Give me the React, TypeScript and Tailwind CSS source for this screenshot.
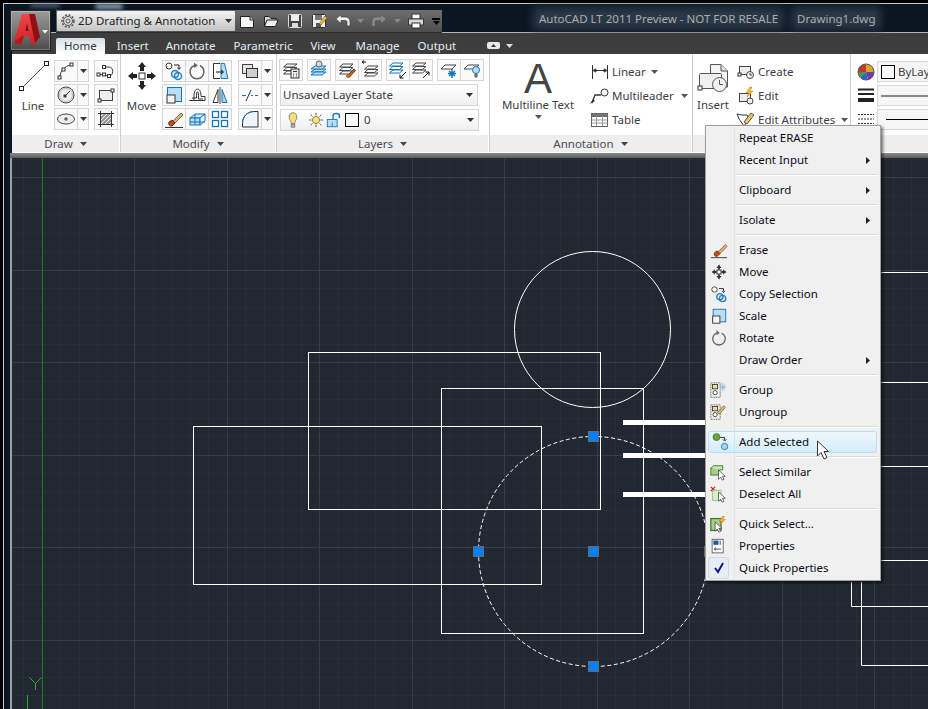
import type { ReactNode } from "react";

const range = (from: number, to: number, step: number) => {
  const out: number[] = [];
  for (let v = from; v <= to; v += step) out.push(v);
  return out;
};

function I({ s = 20, children }: { s?: number; children: ReactNode }) {
  return (
    <svg width={s} height={s} viewBox="0 0 20 20" fill="none" stroke="#3a3a3a" strokeWidth={1} className="shrink-0">
      {children}
    </svg>
  );
}

const Sq = ({ x, y, r = 1.5 }: { x: number; y: number; r?: number }) => (
  <rect x={x - r} y={y - r} width={r * 2} height={r * 2} fill="#fff" stroke="#333" />
);

const ArcIcon = () => (
  <I>
    <path d="M3.5 16.5Q5 6 15.5 3.5" />
    <Sq x={3.5} y={16.5} />
    <Sq x={7.5} y={8.5} />
    <Sq x={15.5} y={3.5} />
  </I>
);
const CircleIcon = () => (
  <I>
    <circle cx="10" cy="10" r="8" fill="#eee" stroke="#444" />
    <circle cx="10" cy="10" r="6.5" stroke="#bbb" />
    <path d="M9 11L14 6" />
    <rect x="8" y="10" width="2" height="2" fill="#333" />
  </I>
);
const EllipseIcon = () => (
  <I>
    <ellipse cx="10" cy="10" rx="8.5" ry="5" fill="#eee" stroke="#444" />
    <path d="M8 10h4M10 8v4" />
  </I>
);
const SplineIcon = () => (
  <I>
    <path d="M3 13.5H7C9 13.5 10 15 13 15C18 15 18 6 13 6H8" />
    <Sq x={2.5} y={13.5} />
    <Sq x={8} y={13.5} />
    <Sq x={13} y={15} />
    <Sq x={8} y={6} />
  </I>
);
const RectIcon = () => (
  <I>
    <rect x="3.5" y="5.5" width="13" height="10" fill="#eee" stroke="#444" />
    <Sq x={3.5} y={15.5} />
    <Sq x={16.5} y={5.5} />
  </I>
);
const HatchIcon = () => (
  <I>
    <rect x="4.5" y="4.5" width="11" height="11" fill="#999" stroke="#777" />
    <path d="M4 8L8 4M4 12L12 4M4 16L16 4M8 16L16 8M12 16L16 12" stroke="#eee" />
    <path d="M2 4.5H18M2 15.5H18M4.5 2V18M15.5 2V18" stroke="#333" />
  </I>
);
const CopyIcon = ({ s = 20 }: { s?: number }) => (
  <I s={s}>
    <circle cx="5" cy="5" r="3" fill="#fff" />
    <path d="M10 4h5v3M13.5 6.5l1.5 2 1.5-2" stroke="#222" />
    <circle cx="11" cy="13" r="3.5" stroke="#2b7fc4" strokeWidth={1.5} fill="#dcecf8" />
    <circle cx="14" cy="15" r="3.5" stroke="#2b7fc4" strokeWidth={1.5} />
  </I>
);
const RotateIcon = ({ s = 20 }: { s?: number }) => (
  <I s={s}>
    <path d="M7 4.5A7 7 0 1 0 13 4.5" stroke="#666" strokeWidth={1.5} />
    <path d="M7 1.5L11 4.5L7 7Z" fill="#666" stroke="none" />
  </I>
);
const StretchIcon = () => (
  <I>
    <path d="M10 2.5H3.5V17.5H10" stroke="#333" />
    <path d="M11 2.5H14.5L18 17.5H11Z" fill="#bcdcf2" stroke="#1c7cc4" />
    <path d="M6 11h7M11 9l2.5 2-2.5 2" stroke="#111" />
  </I>
);
const ScaleIcon = ({ s = 20 }: { s?: number }) => (
  <I s={s}>
    <rect x="3.5" y="2.5" width="14" height="14" fill="#b9dcf0" stroke="#1576bd" />
    <rect x="3" y="10" width="8" height="8" fill="#f4f4f4" stroke="#333" />
  </I>
);
const OffsetIcon = () => (
  <I>
    <path d="M2.5 15.5H7V10.5C7 2 14 2 14 10.5V11.5H18V15.5Z" stroke="#333" />
    <path d="M5 13H9.5V10.5C9.5 5.5 11.500 5.500 11.500 10.500V14H16" stroke="#333" />
  </I>
);
const MirrorIcon = () => (
  <I>
    <path d="M8 4.500L3 17.500H8Z" fill="#fff" stroke="#333" />
    <path d="M12 4.500L17 17.500H12Z" fill="#a9d3ef" stroke="#1576bd" />
    <path d="M10 2V19" stroke="#444" />
  </I>
);
const EraseIcon = ({ s = 20 }: { s?: number }) => (
  <I s={s}>
    <path d="M8 13L17 4L19 6L10 15Z" fill="#d9b27a" stroke="#8a6a3a" />
    <path d="M5 13L8 11L11 14L8 17C6 17.500 4 16 5 13Z" fill="#c2471a" stroke="#7a2a0c" />
    <path d="M1 18.500H19" stroke="#333" />
  </I>
);
const BoxIcon = () => (
  <I>
    <path d="M3 9L8 5H18L13 9Z" fill="#d4e8f6" stroke="#1576bd" />
    <rect x="3" y="9" width="10" height="7" fill="#bcdcf2" stroke="#1576bd" />
    <path d="M13 9L18 5V12L13 16Z" fill="#e6f2fa" stroke="#1576bd" />
    <path d="M8 5V16M3 13H18" stroke="#1576bd" />
  </I>
);
const ArrayIcon = () => (
  <I>
    <g fill="#fff" stroke="#1576bd" strokeWidth={1.3}>
      <rect x="2.500" y="2.500" width="6" height="6" />
      <rect x="11.500" y="2.500" width="6" height="6" />
      <rect x="2.500" y="11.500" width="6" height="6" />
      <rect x="11.500" y="11.500" width="6" height="6" />
    </g>
  </I>
);
const OrderIcon = () => (
  <I>
    <rect x="2.500" y="3.500" width="10" height="9" fill="#e4e4e4" stroke="#444" />
    <rect x="6.500" y="7.500" width="11" height="9" fill="#cfcfcf" stroke="#333" />
  </I>
);
const BreakIcon = () => (
  <I>
    <path d="M2 10.500H6M11 10.500H13M15 10.500H18" stroke="#1576bd" />
    <path d="M6 16L11 5" stroke="#333" />
  </I>
);
const FilletIcon = () => (
  <I>
    <path d="M2.500 18V14C2.500 7 8 2.500 14 2.500H18V18Z" fill="#eef5fb" stroke="#333" />
    <path d="M2.500 14C2.500 7 8 2.500 14 2.500" stroke="#1576bd" />
  </I>
);

// stack of layer sheets used by the Layers panel row
const Sheets = ({ blue = false }: { blue?: boolean }) => (
  <g fill="#fff" stroke={blue ? "#1576bd" : "#444"}>
    <path d="M2.500 14L6 11H16L12.500 14Z" />
    <path d="M2.500 10.500L6 7.500H16L12.500 10.500Z" />
    <path d="M2.500 7L6 4H16L12.500 7Z" />
  </g>
);
const LayerProps = () => (
  <I>
    <Sheets />
    <rect x="10" y="9" width="8" height="9" fill="#e8f0f6" stroke="#333" />
    <path d="M12 11.500h4M12 14h1M15 14h1M12 16h1M15 16h1" />
  </I>
);
const LayerState = () => (
  <I>
    <path d="M2 12L6 9H17L13 12Z" fill="#bcdcf2" stroke="#1576bd" />
    <path d="M2 15L6 12H17L13 15Z" fill="#bcdcf2" stroke="#1576bd" />
    <path d="M2 9L6 6H17L13 9Z" fill="#bcdcf2" stroke="#1576bd" />
    <circle cx="10" cy="4" r="3" fill="#cfd7dd" stroke="#666" />
  </I>
);
const LayerMatch = () => (
  <I>
    <Sheets />
    <path d="M10 16L17 9L18.500 10.500L12.500 17Z" fill="#b9692a" stroke="#6e3a12" />
    <circle cx="11" cy="16" r="2" fill="#b9692a" stroke="none" />
  </I>
);
const LayerPrev = () => (
  <I>
    <path d="M2 2h4M2 2l2-1.500M2 2l2 1.500" stroke="#111" />
    <g transform="translate(2 2)">
      <Sheets />
    </g>
  </I>
);
const LayerDown = ({ up = false, blue = false }: { up?: boolean; blue?: boolean }) => (
  <I>
    <g transform="translate(-1 -1)">
      <Sheets blue={blue} />
    </g>
    {up ? <path d="M12 18L18 12M14.500 12H18V15.500" stroke="#111" /> : <path d="M18 12L12 18M15.500 18H12V14.500" stroke="#111" />}
  </I>
);
const LayerFreeze = () => (
  <I>
    <path d="M2 9L6 5H17L13 9Z" fill="#fff" stroke="#444" />
    <path d="M13 9v9M9 13.500h8M10 11l6 5M16 11l-6 5" stroke="#1576bd" strokeWidth={1.5} />
  </I>
);
const LayerOff = () => (
  <I>
    <path d="M2 9L6 5H17L13 9Z" fill="#fff" stroke="#444" />
    <circle cx="14" cy="10" r="3.500" fill="#bcdcf2" stroke="#1576bd" />
    <path d="M13 14h2v3h-2Z" fill="#999" stroke="#555" />
  </I>
);
const Bulb = () => (
  <>
    <path d="M10 2C5 2 5 8 7 10.500C8 12 8 13 8 14H12C12 13 12 12 13 10.500C15 8 15 2 10 2Z" fill="#f7de7c" stroke="#777" />
    <path d="M8 15H12V18H8Z" fill="#bbb" stroke="#777" />
  </>
);
const Sun = () => (
  <>
    <circle cx="10" cy="10" r="4" fill="#f6e28a" stroke="#8a7a30" />
    <path d="M10 2v3M10 15v3M2 10h3M15 10h3M4 4l2 2M14 14l2 2M16 4l-2 2M6 14l-2 2" stroke="#555" />
  </>
);
const Lock = () => (
  <>
    <rect x="2.500" y="9.500" width="11" height="8" fill="#b9dcf0" stroke="#1576bd" />
    <path d="M8 17v-4" stroke="#1576bd" />
    <path d="M9 9V5C9 2 16 2 16 5V8" stroke="#1576bd" strokeWidth={1.6} />
  </>
);
const LinearIcon = () => (
  <I>
    <path d="M2.500 3V17M17.500 3V17" stroke="#333" />
    <path d="M3 8.500H17" stroke="#333" />
    <path d="M3 8.500l3-1.500v3ZM17 8.500l-3-1.500v3Z" fill="#333" />
  </I>
);
const LeaderIcon = () => (
  <I>
    <path d="M2 17L5 9H11" stroke="#333" strokeWidth={1.3} />
    <circle cx="14.500" cy="6.500" r="3.500" fill="#fff" stroke="#333" />
    <path d="M0 18L3 13L5 15Z" fill="#333" stroke="none" />
  </I>
);
const TableIcon = () => (
  <I>
    <rect x="1.500" y="3.500" width="16" height="13" fill="#fff" stroke="#666" />
    <rect x="1.500" y="3.500" width="16" height="3" fill="#777" stroke="#666" />
    <path d="M6.500 6v10M12.500 6v10M2 10h15M2 13h15" stroke="#999" />
  </I>
);
const CreateIcon = () => (
  <I>
    <rect x="3.500" y="4.500" width="11" height="8" fill="#eee" stroke="#444" />
    <rect x="2" y="11" width="3" height="3" fill="#fff" stroke="#333" />
    <circle cx="14" cy="13" r="3.500" fill="#eee" stroke="#444" />
    <path d="M14 11v2h2" stroke="#444" />
  </I>
);
const EditIcon = () => (
  <I>
    <rect x="3.500" y="7.500" width="11" height="8" fill="#eee" stroke="#444" />
    <circle cx="14" cy="15" r="3" fill="#eee" stroke="#444" />
    <path d="M14 1L10 7H13L11 11L17 5H14L16 1Z" fill="#f3c13a" stroke="#b07a10" strokeWidth={0.5} />
  </I>
);
const AttrIcon = () => (
  <I>
    <path d="M1 4L6 5H11L13 9L8 16L3 9Z" fill="#fff" stroke="#333" />
    <path d="M8 12L15 3L18 5L11 14Z" fill="#f1c95a" stroke="#555" />
  </I>
);
const ColorWheel = () => (
  <svg width="18" height="18" viewBox="0 0 18 18" className="shrink-0">
    <path d="M9 9L9 1A8 8 0 0 1 17 9Z" fill="#d8a62c" />
    <path d="M9 9L17 9A8 8 0 0 1 11 16.700Z" fill="#6a3fa8" />
    <path d="M9 9L11 16.700A8 8 0 0 1 3 14Z" fill="#2c62c4" />
    <path d="M9 9L3 14A8 8 0 0 1 1 9Z" fill="#3e9c3a" />
    <path d="M9 9L1 9A8 8 0 0 1 9 1Z" fill="#c23a2a" />
    <circle cx="9" cy="9" r="8" fill="none" stroke="#555" />
  </svg>
);

const GroupIcon = () => (
  <I s={17}>
    <rect x="1" y="1" width="11" height="17" stroke="#333" strokeDasharray="1 1" />
    <rect x="3" y="3" width="6" height="5" fill="#f2df8a" stroke="#333" />
    <circle cx="6" cy="12.500" r="2.500" fill="#fff" stroke="#333" />
    <path d="M12 3l6 6M18 3l-6 6M15 1v10M11 6h8" stroke="#7ab6e6" />
  </I>
);
const UngroupIcon = () => (
  <I s={17}>
    <rect x="1" y="1" width="11" height="17" stroke="#333" strokeDasharray="1 1" />
    <rect x="3" y="3" width="6" height="5" fill="#f2df8a" stroke="#333" />
    <circle cx="6" cy="12.500" r="2.500" fill="#fff" stroke="#333" />
    <path d="M9 10L16 2L18 4L11 12Z" fill="#e7c24a" stroke="#666" />
  </I>
);
const AddSelIcon = () => (
  <I s={18}>
    <circle cx="5" cy="4.500" r="3.800" fill="#6aa540" stroke="#3c7a20" />
    <path d="M9 5h5v3M12 7l2 2 2-2" stroke="#222" />
    <circle cx="14" cy="15" r="3.500" fill="#a9d3ef" stroke="#1576bd" />
  </I>
);
const Arrow = ({ x, y }: { x: number; y: number }) => (
  <path transform={`translate(${x} ${y})`} d="M0 0V11L2.500 8.500L4.500 12L6.500 11L4.500 7.500H8Z" fill="#fff" stroke="#444" strokeWidth={0.9} />
);
const SimilarIcon = () => (
  <I s={17}>
    <rect x="1" y="5" width="10" height="8" fill="#a8cc88" stroke="#2d7a20" />
    <path d="M1 5L4 2H15V7H11" fill="#c9e0b2" stroke="#2d7a20" />
    <Arrow x={10} y={7} />
  </I>
);
const DeselectIcon = () => (
  <I s={17}>
    <path d="M1 1l5 5M6 1L1 6" stroke="#d0241c" strokeWidth={1.5} />
    <rect x="3" y="5" width="10" height="12" fill="#d9ecc6" stroke="#2d9a20" strokeDasharray="1 1" />
    <Arrow x={10} y={7} />
  </I>
);
const QuickSelIcon = () => (
  <I s={17}>
    <rect x="1" y="3" width="12" height="14" fill="#a8cc88" stroke="#2d7a20" strokeWidth={1.4} />
    <path d="M15 0L11 6H14L12 10L18 4H15L17 0Z" fill="#f3c13a" stroke="#c0651a" strokeWidth={0.6} />
    <Arrow x={6} y={7} />
  </I>
);
const PropsIcon = () => (
  <I s={17}>
    <rect x="2.500" y="1.500" width="13" height="16" fill="#fff" stroke="#555" />
    <rect x="4" y="3" width="6" height="5" fill="#1f5a96" stroke="none" />
    <path d="M12 3v5M5 13h8M5 13l2-1.500M5 13l2 1.500" stroke="#333" />
  </I>
);

const MoveIcon = () => (
  <svg width="32" height="32" viewBox="0 0 32 32" className="shrink-0">
    <rect x="13" y="13" width="6" height="6" fill="#fff" stroke="#333" />
    <path d="M16 2L20 7H18V11H14V7H12ZM16 30L20 25H18V21H14V25H12ZM2 16L7 12V14H11V18H7V20ZM30 16L25 12V14H21V18H25V20Z" fill="#222" />
  </svg>
);
const MiniMove = () => (
  <svg width="16" height="16" viewBox="0 0 32 32" className="shrink-0">
    <rect x="12" y="12" width="8" height="8" fill="#fff" stroke="#333" strokeWidth={2} />
    <path d="M16 1L21 8H18V11H14V8H11ZM16 31L21 24H18V21H14V24H11ZM1 16L8 11V14H11V18H8V21ZM31 16L24 11V14H21V18H24V21Z" fill="#333" />
  </svg>
);

const Caret = ({ c = "#333" }: { c?: string }) => (
  <svg width="7" height="4" viewBox="0 0 7 4" className="shrink-0">
    <path d="M0 0H7L3.500 4Z" fill={c} />
  </svg>
);

function Tool({ children, split = false }: { children?: ReactNode; split?: boolean }) {
  return (
    <div
      className={`flex h-[22px] ${split ? "w-[12px]" : "w-[24px]"} -mr-px items-center justify-center border border-[#d6d6d6] bg-[#fafafa]`}
    >
      {split ? <Caret /> : children}
    </div>
  );
}

function Row({ children }: { children: ReactNode }) {
  return <div className="flex h-[22px]">{children}</div>;
}

function Panel({ w, title, children }: { w: string; title: string; children: ReactNode }) {
  return (
    <div className={`flex ${w} shrink-0 flex-col border-r border-[#cfcfcf]`}>
      <div className="h-[81px] overflow-hidden bg-white">{children}</div>
      <div className="mr-px flex h-[17px] items-center justify-center gap-[7px] bg-[#eeeeee] text-[11.5px] leading-none text-[#4c4c56]">
        <span>{title}</span>
        <Caret c="#444" />
      </div>
    </div>
  );
}

function TextTool({ icon, label, caret, gap }: { icon: ReactNode; label: string; caret?: boolean; gap?: string }) {
  return (
    <div className="flex h-[24px] items-center">
      {icon}
      <span className="ml-[2px] whitespace-nowrap text-[#3c3c46]">{label}</span>
      {caret && (
        <span className={gap}>
          <Caret c="#555" />
        </span>
      )}
    </div>
  );
}

type MenuEntry =
  | { sep: true }
  | { label: string; icon?: ReactNode; sub?: boolean; hot?: boolean; checked?: boolean };

const menu: MenuEntry[] = [
  { label: "Repeat ERASE" },
  { label: "Recent Input", sub: true },
  { sep: true },
  { label: "Clipboard", sub: true },
  { sep: true },
  { label: "Isolate", sub: true },
  { sep: true },
  { label: "Erase", icon: <EraseIcon s={18} /> },
  { label: "Move", icon: <MiniMove /> },
  { label: "Copy Selection", icon: <CopyIcon s={18} /> },
  { label: "Scale", icon: <ScaleIcon s={18} /> },
  { label: "Rotate", icon: <RotateIcon s={18} /> },
  { label: "Draw Order", sub: true },
  { sep: true },
  { label: "Group", icon: <GroupIcon /> },
  { label: "Ungroup", icon: <UngroupIcon /> },
  { sep: true },
  { label: "Add Selected", icon: <AddSelIcon />, hot: true },
  { sep: true },
  { label: "Select Similar", icon: <SimilarIcon /> },
  { label: "Deselect All", icon: <DeselectIcon /> },
  { sep: true },
  { label: "Quick Select...", icon: <QuickSelIcon /> },
  { label: "Properties", icon: <PropsIcon /> },
  { label: "Quick Properties", checked: true },
];

function ContextMenu() {
  return (
    <div className="absolute left-[705px] top-[125px] w-[176px] border border-[#a0a0a0] bg-[#f0f0f0] py-px text-[11.5px] leading-none text-[#0c0c18] shadow-[2px_2px_3px_rgba(0,0,0,0.55)]">
      {menu.map((m, i) =>
        "sep" in m ? (
          <div key={i} className="flex h-[8px]">
            <div className="w-[29px] border-r border-[#e2e2e2]" />
            <div className="flex flex-1 items-center pr-[2px]">
              <div className="h-[2px] w-full border-b border-white bg-[#dcdcdc]" />
            </div>
          </div>
        ) : (
          <div
            key={i}
            className={`relative flex h-[22px] items-center ${
              m.hot ? "ml-[2px] mr-[3px] rounded-[3px] border border-[#b8e0f4] bg-gradient-to-b from-[#eef8fd] to-[#d6ecf8]" : ""
            }`}
          >
            <div
              className={`flex h-full items-center justify-center ${m.hot ? "w-[26px] pr-px" : "w-[29px] pr-[3px]"} border-r ${
                m.hot ? "border-[#cfe6f2]" : "border-[#e2e2e2]"
              }`}
            >
              {m.checked ? (
                <div className="flex h-[22px] w-[21px] items-center justify-center rounded-[3px] border border-[#cdd8ea] bg-[#e6edf8]">
                  <svg width="12" height="12" viewBox="0 0 12 12">
                    <path d="M2 6L5 10L10 1" fill="none" stroke="#14148c" strokeWidth={2} />
                  </svg>
                </div>
              ) : (
                m.icon
              )}
            </div>
            <span className="ml-[4px] flex-1 whitespace-nowrap">{m.label}</span>
            {m.sub && (
              <svg width="4" height="7" viewBox="0 0 4 7" className="mr-[10px]">
                <path d="M0 0L4 3.500L0 7Z" fill="#222" />
              </svg>
            )}
            {m.hot && (
              <svg width="16" height="22" viewBox="0 0 16 22" className="absolute left-[107px] top-[8px]">
                <path d="M1.500 1V16L5 12.500L8 19L11 17.500L8 11.500H12.500Z" fill="#fff" stroke="#333" />
              </svg>
            )}
          </div>
        ),
      )}
    </div>
  );
}

function Drawing() {
  const minorX = range(42 - 18.5, 928, 18.5);
  const minorY = range(159, 709, 18.5);
  const majorX = range(134.5, 928, 92.5);
  const majorY = range(177.5, 709, 92.5);
  const grips: [number, number][] = [
    [593.5, 436.5],
    [478.5, 551.5],
    [593.5, 551.5],
    [593.5, 666.5],
    [709.5, 551.5],
  ];
  return (
    <svg viewBox="12 158 916 551" className="absolute inset-0 h-full w-full">
      <g stroke="#282e38" shapeRendering="crispEdges">
        {minorX.map((x) => (
          <line key={x} x1={x} x2={x} y1={158} y2={709} />
        ))}
        {minorY.map((y) => (
          <line key={y} x1={12} x2={928} y1={y} y2={y} />
        ))}
      </g>
      <g stroke="#363c4a" shapeRendering="crispEdges">
        {majorX.map((x) => (
          <line key={x} x1={x} x2={x} y1={158} y2={709} />
        ))}
        {majorY.map((y) => (
          <line key={y} x1={12} x2={928} y1={y} y2={y} />
        ))}
      </g>
      <line x1={42.5} x2={42.5} y1={158} y2={709} stroke="#1e7a24" />
      <path d="M29.500 677.500L35.500 683.500L41.500 677.500M35.500 683.500V690" stroke="#24b02c" fill="none" />
      <line x1={27.5} x2={27.5} y1={695} y2={709} stroke="#24b02c" />
      <g fill="none" stroke="#fff">
        <rect x={308.5} y={352.5} width={292} height={157} />
        <rect x={441.5} y={388.5} width={202} height={245} />
        <rect x={193.5} y={426.5} width={348} height={158} />
        <circle cx={592.5} cy={329.5} r={78} />
        <circle cx={593.5} cy={551.5} r={115} strokeDasharray="4 2.500" />
        <path d="M881 272.500H928M881 382.500H928M881 466.500H928M881 560.500H928M851.500 582V606.500H928M861.500 582V665.500H928" />
      </g>
      <g fill="#fff">
        <rect x={623} y={420} width={82} height={5} />
        <rect x={623} y={453} width={82} height={5} />
        <rect x={623} y={492} width={82} height={5} />
      </g>
      {grips.map(([x, y]) => (
        <rect key={`${x}-${y}`} x={x - 5} y={y - 5} width={10} height={10} fill="#0080ff" stroke="#6b6b6b" />
      ))}
    </svg>
  );
}

function QuickBar() {
  return (
    <div className="flex h-[23px] w-[386px] items-center border-b border-[#2a2a2a] bg-gradient-to-b from-[#6e6e6e] to-[#4e4e4e] pl-px">
      <div className="flex h-[20px] w-[178px] items-center rounded-[1px] bg-gradient-to-b from-[#f4f4f4] to-[#c4c4c4] pl-[3px] pr-[3px] text-[11.5px] leading-none text-[#222]">
        <svg width="16" height="16" viewBox="0 0 16 16" className="shrink-0">
          <circle cx="8" cy="8" r="6" fill="none" stroke="#555" strokeWidth={1.500} strokeDasharray="2 1.500" />
          <circle cx="8" cy="8" r="4.500" fill="none" stroke="#555" />
          <circle cx="8" cy="8" r="2" fill="none" stroke="#555" />
        </svg>
        <span className="ml-[2px] flex-1 whitespace-nowrap">2D Drafting &amp; Annotation</span>
        <Caret />
      </div>
      <div className="flex h-full w-[24px] items-center justify-center">
        <svg width="16" height="16" viewBox="0 0 16 16">
          <path d="M1.500 3.500H11L14.500 7V14.500H1.500Z" fill="#f4f4f4" stroke="#222" />
          <path d="M11 3.500V7H14.500" fill="#ccc" stroke="#222" />
        </svg>
      </div>
      <div className="flex h-full w-[24px] items-center justify-center">
        <svg width="16" height="16" viewBox="0 0 16 16">
          <path d="M1.500 13.500V3.500H6L8 5.500H13V7" fill="#d8d8d8" stroke="#222" />
          <path d="M1.500 13.500L4 7H15L12.500 13.500Z" fill="#f2f2f2" stroke="#222" />
        </svg>
      </div>
      <div className="flex h-full w-[24px] items-center justify-center">
        <svg width="16" height="16" viewBox="0 0 16 16">
          <rect x="1.500" y="1.500" width="13" height="13" rx="1" fill="#444" stroke="#ddd" />
          <rect x="4" y="2" width="8" height="6" fill="#eee" />
          <rect x="5" y="10" width="6" height="4" fill="#ddd" />
        </svg>
      </div>
      <div className="flex h-full w-[24px] items-center justify-center">
        <svg width="16" height="16" viewBox="0 0 16 16">
          <rect x="1.500" y="1.500" width="13" height="13" rx="1" fill="#eee" stroke="#333" />
          <rect x="4" y="2" width="7" height="5" fill="#777" />
          <rect x="5" y="10" width="5" height="4" fill="#555" />
          <path d="M8 11L14 3L16 5L10 12Z" fill="#f0c040" stroke="#6a4a10" strokeWidth={0.6} />
        </svg>
      </div>
      <div className="flex h-full w-[24px] items-center justify-center">
        <svg width="16" height="16" viewBox="0 0 16 16">
          <path d="M1 6L6 1.500V4H10C14 4 15 7 15 9V13H12V9C12 8 11.500 7.500 10 7.500H6V10.500Z" fill="#f0f0f0" stroke="#333" strokeWidth={0.6} />
        </svg>
      </div>
      <div className="flex h-full w-[11px] items-center justify-center">
        <Caret c="#8a8a8a" />
      </div>
      <div className="flex h-full w-[26px] items-center justify-center">
        <svg width="16" height="16" viewBox="0 0 16 16">
          <path d="M15 6L10 1.500V4H6C2 4 1 7 1 9V13H4V9C4 8 4.500 7.500 6 7.500H10V10.500Z" fill="#8a8a8a" stroke="#5a5a5a" strokeWidth={0.6} />
        </svg>
      </div>
      <div className="flex h-full w-[11px] items-center justify-center">
        <Caret c="#8a8a8a" />
      </div>
      <div className="flex h-full w-[26px] items-center justify-center">
        <svg width="18" height="16" viewBox="0 0 18 16">
          <rect x="5" y="1" width="8" height="5" fill="#fff" stroke="#333" />
          <path d="M1.500 6H16.500V12H1.500Z" fill="#d8d8d8" stroke="#333" />
          <rect x="5" y="10" width="8" height="5" fill="#fff" stroke="#333" />
        </svg>
      </div>
      <div className="flex h-full flex-col items-center justify-center gap-px pl-[3px]">
        <div className="h-[2px] w-[8px] bg-black" />
        <Caret c="#000" />
      </div>
    </div>
  );
}

export default function App() {
  const tabs = [
    ["Insert", "ml-[12px]"],
    ["Annotate", "ml-[17px]"],
    ["Parametric", "ml-[18px]"],
    ["View", "ml-[18px]"],
    ["Manage", "ml-[20px]"],
    ["Output", "ml-[18px]"],
  ];

  return (
    <div
      className="relative h-[709px] w-[928px] overflow-hidden bg-black pl-[3px] pt-[3px] text-[11.5px]"
      style={{ fontFamily: '"Noto Sans", Tahoma, sans-serif' }}
    >
      <div className="flex h-[706px] flex-col border-l border-t border-[#c8c8c8] bg-[#0a1622] pl-[8px]">
        {/* title bar */}
        <div className="flex h-[29px] shrink-0 items-end border-b border-[#b4b4b4] pl-[44px]">
          <div className="-mb-px flex-none">
            <QuickBar />
          </div>
          <div className="mb-[8px] ml-[97px] flex items-center whitespace-nowrap leading-none text-[#a9adb0]">
            <span className="bg-[#2a3846] shadow-[0_0_8px_6px_#2a3846]">AutoCAD LT 2011 Preview - NOT FOR RESALE</span>
            <span className="ml-[19px] bg-[#2a3846] shadow-[0_0_8px_6px_#2a3846]">Drawing1.dwg</span>
          </div>
        </div>

        {/* tabs */}
        <div className="flex h-[21px] shrink-0 items-end bg-[#3d3d3d] pl-[44px] leading-none">
          <div className="flex h-[16px] items-center rounded-t-[2px] bg-gradient-to-b from-[#d8e0e6] to-white px-[8px] text-[#30363c]">
            Home
          </div>
          {tabs.map(([t, gap]) => (
            <span key={t} className={`${gap} mb-[3px] text-[#e0eef6]`}>
              {t}
            </span>
          ))}
          <div className="mb-[5px] ml-[31px] flex items-center gap-[6px]">
            <div className="flex h-[7px] w-[13px] items-center justify-center rounded-[2px] bg-[#e8e8e8]">
              <svg width="5" height="3" viewBox="0 0 5 3">
                <path d="M0 3L2.500 0L5 3Z" fill="#333" />
              </svg>
            </div>
            <Caret c="#ddd" />
          </div>
        </div>

        {/* ribbon */}
        <div className="flex shrink-0 border-b border-white bg-white leading-none">
          <Panel w="w-[109px]" title="Draw">
            <div className="flex pl-[6px] pt-[6px]">
              <div className="flex w-[36px] flex-col items-start">
                <svg width="32" height="32" viewBox="0 0 32 32">
                  <path d="M3.500 28.500L28.500 3.500" stroke="#555" />
                  <rect x="1.500" y="26.500" width="4" height="4" fill="#fff" stroke="#222" />
                  <rect x="26.500" y="1.500" width="4" height="4" fill="#fff" stroke="#222" />
                </svg>
                <span className="mt-[8px] w-[30px] text-center text-[#3c3c46]">Line</span>
              </div>
              <div className="flex w-[40px] flex-col gap-[2px]">
                <Row>
                  <Tool><ArcIcon /></Tool>
                  <Tool split />
                </Row>
                <Row>
                  <Tool><CircleIcon /></Tool>
                  <Tool split />
                </Row>
                <Row>
                  <Tool><EllipseIcon /></Tool>
                  <Tool split />
                </Row>
              </div>
              <div className="flex flex-col gap-[2px]">
                <Row><Tool><SplineIcon /></Tool></Row>
                <Row><Tool><RectIcon /></Tool></Row>
                <Row><Tool><HatchIcon /></Tool></Row>
              </div>
            </div>
          </Panel>

          <Panel w="w-[156px]" title="Modify">
            <div className="flex pl-[4px] pt-[6px]">
              <div className="mr-[4px] flex w-[33px] flex-col items-center">
                <MoveIcon />
                <span className="mt-[8px] text-[#3c3c46]">Move</span>
              </div>
              <div className="flex w-[76px] flex-col gap-[2px]">
                <Row>
                  <Tool><CopyIcon /></Tool>
                  <Tool><RotateIcon /></Tool>
                  <Tool><StretchIcon /></Tool>
                </Row>
                <Row>
                  <Tool><ScaleIcon /></Tool>
                  <Tool><OffsetIcon /></Tool>
                  <Tool><MirrorIcon /></Tool>
                </Row>
                <Row>
                  <Tool><EraseIcon /></Tool>
                  <Tool><BoxIcon /></Tool>
                  <Tool><ArrayIcon /></Tool>
                </Row>
              </div>
              <div className="flex flex-col gap-[2px]">
                <Row>
                  <Tool><OrderIcon /></Tool>
                  <Tool split />
                </Row>
                <Row>
                  <Tool><BreakIcon /></Tool>
                  <Tool split />
                </Row>
                <Row>
                  <Tool><FilletIcon /></Tool>
                  <Tool split />
                </Row>
              </div>
            </div>
          </Panel>

          <Panel w="w-[213px]" title="Layers">
            <div className="flex flex-col pl-[2px] pt-[5px]">
              <div className="flex gap-[5px]">
                <Row><Tool><LayerProps /></Tool></Row>
                <Row><Tool><LayerState /></Tool></Row>
                <Row>
                  <Tool><LayerMatch /></Tool>
                  <Tool><LayerPrev /></Tool>
                </Row>
                <Row>
                  <Tool><LayerDown blue /></Tool>
                  <Tool><LayerDown up /></Tool>
                </Row>
                <Row>
                  <Tool><LayerFreeze /></Tool>
                  <Tool><LayerOff /></Tool>
                </Row>
              </div>
              <div className="ml-px mt-[3px] flex h-[22px] w-[198px] items-center border border-[#d6d6d6] bg-gradient-to-b from-white to-[#f0f0f0] pl-[2px] pr-[4px] text-[#3c3c46]">
                <span className="flex-1">Unsaved Layer State</span>
                <Caret />
              </div>
              <div className="ml-px mt-[3px] flex h-[22px] w-[199px] items-center border border-[#d6d6d6] bg-gradient-to-b from-white to-[#f0f0f0] pl-[3px] pr-[4px] text-[#3c3c46]">
                <I s={18}><Bulb /></I>
                <span className="ml-[5px]"><I s={18}><Sun /></I></span>
                <I s={18}><Lock /></I>
                <div className="ml-[2px] h-[14px] w-[14px] border border-black bg-white" />
                <span className="ml-[5px] flex-1">0</span>
                <Caret />
              </div>
            </div>
          </Panel>

          <Panel w="w-[203px]" title="Annotation">
            <div className="flex pl-[5px]">
              <div className="flex w-[86px] flex-col items-center pt-[7px] text-[#3c3c46]">
                <span className="h-[36px] text-[42px] leading-[36px] text-[#444]" style={{ fontFamily: '"Liberation Sans", sans-serif' }}>
                  A
                </span>
                <span className="mt-[2px] whitespace-nowrap">Multiline Text</span>
                <span className="mt-[4px]"><Caret c="#555" /></span>
              </div>
              <div className="ml-[9px] flex flex-col pt-[6px]">
                <TextTool icon={<LinearIcon />} label="Linear" caret gap="ml-[5px]" />
                <TextTool icon={<LeaderIcon />} label="Multileader" caret gap="ml-[7px]" />
                <TextTool icon={<TableIcon />} label="Table" />
              </div>
            </div>
          </Panel>

          <Panel w="w-[158px]" title="">
            <div className="flex pl-[4px]">
              <div className="flex w-[39px] flex-col items-start pt-[9px] text-[#3c3c46]">
                <svg width="32" height="30" viewBox="0 0 32 30">
                  <path d="M13.500 1.500H24L30.500 8V24H13.500Z" fill="#f4f4f4" stroke="#555" />
                  <path d="M24 1.500V8H30.500" fill="#ddd" stroke="#555" />
                  <rect x="2.500" y="10.500" width="22" height="15" rx="1" fill="#f0f0f0" stroke="#555" />
                  <rect x="1" y="23" width="4" height="4" fill="#fff" stroke="#333" />
                  <circle cx="22.500" cy="21.500" r="7" fill="#f0f0f0" stroke="#555" />
                  <path d="M22.500 17V21.500H26" stroke="#555" fill="none" />
                </svg>
                <span className="mt-[6px]">Insert</span>
              </div>
              <div className="flex flex-col pt-[6px]">
                <TextTool icon={<CreateIcon />} label="Create" />
                <TextTool icon={<EditIcon />} label="Edit" />
                <TextTool icon={<AttrIcon />} label="Edit Attributes" caret gap="ml-[6px]" />
              </div>
            </div>
          </Panel>

          <div className="flex-1 bg-white">
            <div className="flex h-[81px] flex-col gap-[3px] pl-[6px] pt-[7px] text-[#3c3c46]">
              <div className="flex h-[21px] items-center gap-[2px]">
                <ColorWheel />
                <div className="flex h-[21px] flex-1 items-center border border-r-0 border-[#d6d6d6] bg-[#f6f6f6] pl-[3px]">
                  <div className="h-[14px] w-[14px] border border-black bg-white" />
                  <span className="ml-[3px]">ByLay</span>
                </div>
              </div>
              <div className="flex h-[21px] items-center gap-[2px]">
                <svg width="18" height="16" viewBox="0 0 18 16">
                  <path d="M1 1.500H17M1 6H17" stroke="#222" strokeWidth={2} />
                  <path d="M1 12H17" stroke="#222" strokeWidth={4} />
                </svg>
                <div className="flex h-[21px] flex-1 items-center border border-r-0 border-[#d6d6d6] bg-[#f6f6f6] pl-[3px]">
                  <div className="h-[2px] w-full bg-[#888]" />
                </div>
              </div>
              <div className="flex h-[21px] items-center gap-[2px]">
                <svg width="18" height="16" viewBox="0 0 18 16">
                  <path d="M1 2.500H17M1 7H17M1 11.500H17" stroke="#333" strokeDasharray="2 1" />
                </svg>
                <div className="flex h-[21px] flex-1 items-center border border-r-0 border-[#d6d6d6] bg-[#f6f6f6] pl-[8px]">
                  <div className="h-px w-full bg-black" />
                </div>
              </div>
            </div>
            <div className="h-[17px] bg-[#eeeeee]" />
          </div>
        </div>

        {/* gray strip under the ribbon, then the model space */}
        <div className="-ml-[2px] h-[5px] shrink-0 bg-gradient-to-b from-[#8a8a8a] to-[#5e5e5e]" />
        <div className="relative -ml-[2px] flex-1 border-l-2 border-[#a0a0a0] bg-[#222831]">
          <Drawing />
        </div>
      </div>

      {/* glass highlights on the window frame */}
      <div className="absolute left-[30px] top-[4px] h-[3px] w-[30px] rounded-full bg-[#5f7488] blur-[2px]" />
      <div className="absolute left-[95px] top-[4px] h-[5px] w-[28px] rounded-full bg-[#8ea6bc] blur-[2px]" />

      {/* application button */}
      <div className="absolute left-[10px] top-[10px] flex h-[41px] w-[41px] border border-[#222] bg-gradient-to-b from-[#9a9a9a] via-[#777] to-[#4a4a4a] shadow-[inset_0_0_0_1px_rgba(255,255,255,0.25)]">
        <svg width="39" height="39" viewBox="0 0 39 39">
          <defs>
            <linearGradient id="logoRed" x1="0" y1="0" x2="0" y2="1">
              <stop offset="0" stopColor="#f0484a" />
              <stop offset="1" stopColor="#d01c20" />
            </linearGradient>
          </defs>
          <path d="M18 3L24 3L29 26L21 35L19 26Z" fill="#8e1014" />
          <path d="M11 3L18 3L24 32L21 35L18 25H13L10 34L3 31Z" fill="url(#logoRed)" />
          <path d="M14.500 20L16 12L17.500 20Z" fill="#7a0e10" />
          <path d="M3 31L10 34L13 25L11 25Z" fill="#b8161a" />
          <path d="M31 19H37L34 22.500Z" fill="#f0f0f0" />
        </svg>
      </div>

      <ContextMenu />
    </div>
  );
}
